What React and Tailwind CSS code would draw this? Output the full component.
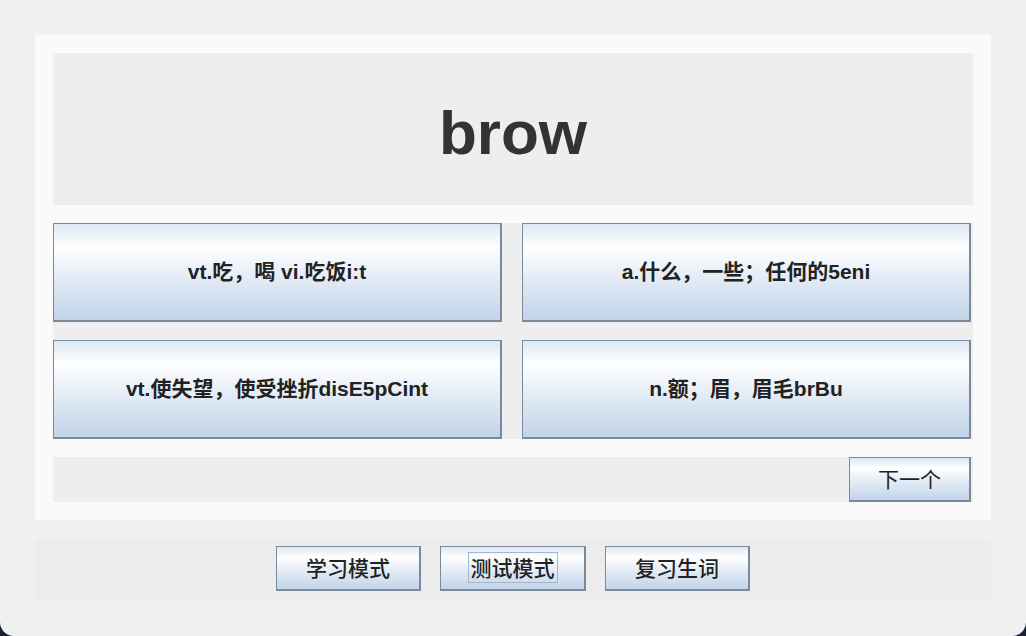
import React from 'react';

const btn =
  'flex items-center justify-center border-t border-l border-r-2 border-b-2 border-[#7b8a9a] bg-[linear-gradient(to_bottom,#dce7f3_0%,#ffffff_24%,#e4ecf6_55%,#c1d4e8_100%)] text-[#222]';

const options = [
  'vt.吃，喝 vi.吃饭i:t',
  'a.什么，一些；任何的5eni',
  'vt.使失望，使受挫折disE5pCint',
  'n.额；眉，眉毛brBu',
];

export default function App() {
  return (
    <div className="w-[1026px] h-[636px] bg-[#1b2230]">
      <div className="w-full h-full bg-[#f0f0f0] rounded-b-[14px] pt-[35px] px-[35px] font-['Liberation_Sans','Noto_Sans_CJK_SC',sans-serif]">
        <div className="bg-[#fafafa] h-[485px] p-[18px] flex flex-col">
          <div className="h-[152px] shrink-0 bg-[#eeeeee] flex items-center justify-center">
            <span className="text-[62px] font-bold text-[#333] leading-none mt-[8px]">brow</span>
          </div>

          <div className="mt-[18px] bg-[#eeeeee] grid grid-cols-[449px_449px] grid-rows-[99px_99px] gap-x-[20px] gap-y-[18px] pr-[2px]">
            {options.map((o) => (
              <button key={o} className={`${btn} h-[99px] text-[21px] font-bold`}>
                {o}
              </button>
            ))}
          </div>

          <div className="mt-[18px] h-[46px] bg-[#eeeeee] flex justify-end pr-[2px]">
            <button className={`${btn} w-[122px] h-[45px] text-[21px] font-['Noto_Sans_CJK_SC',sans-serif]`}>
              下一个
            </button>
          </div>
        </div>

        <div className="mt-[20px] h-[60px] bg-[#ececec] flex items-center justify-center gap-[19px] pb-[4px]">
          <button className={`${btn} w-[145px] h-[45px] text-[21px] font-['Noto_Sans_CJK_SC',sans-serif] font-medium`}>
            学习模式
          </button>
          <button className={`${btn} w-[146px] h-[45px] text-[21px] font-['Noto_Sans_CJK_SC',sans-serif] font-medium`}>
            <span className="border border-[#a3b6cb] px-[2px] leading-[29px]">测试模式</span>
          </button>
          <button className={`${btn} w-[145px] h-[45px] text-[21px] font-['Noto_Sans_CJK_SC',sans-serif] font-medium`}>
            复习生词
          </button>
        </div>
      </div>
    </div>
  );
}
